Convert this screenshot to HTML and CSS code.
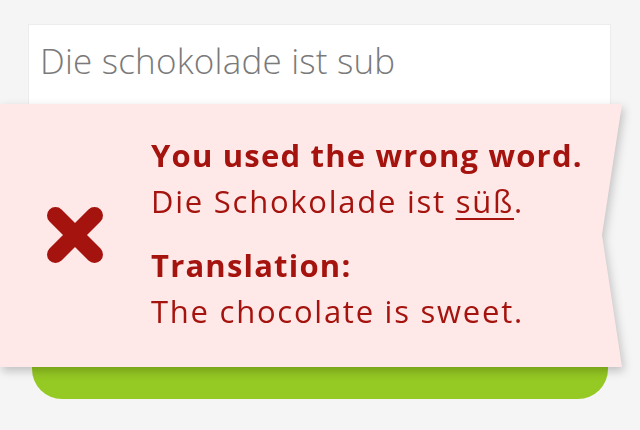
FILE: index.html
```html
<!DOCTYPE html>
<html lang="de">
<head>
<meta charset="utf-8">
<link rel="stylesheet" href="styles.css">
</head>
<body>
<div class="stage">
  <div class="answer-box">
    <span class="answer-text">Die schokolade ist sub</span>
  </div>
  <div class="check-button"></div>

  <div class="feedback-wrap">
    <div class="feedback">
      <div class="feedback-icon">
        <svg width="56" height="56" viewBox="0 0 56 56" aria-hidden="true">
          <path d="M8.5 8.5 L47.5 47.5 M47.5 8.5 L8.5 47.5" stroke="#a5130e" stroke-width="17" stroke-linecap="round" fill="none"/>
        </svg>
      </div>
      <div class="feedback-text">
        <div class="block">
          <div class="title">You used the wrong word.</div>
          <div class="line">Die Schokolade ist <u>süß</u>.</div>
        </div>
        <div class="block">
          <div class="title">Translation:</div>
          <div class="line">The chocolate is sweet.</div>
        </div>
      </div>
    </div>
  </div>
</div>
</body>
</html>
```

FILE: styles.css
```css
html, body {
  margin: 0;
  padding: 0;
}
body {
  background: #f5f5f5;
  width: 640px;
  height: 430px;
  overflow: hidden;
  font-family: "Open Sans", "Lato", sans-serif;
}
.stage {
  position: relative;
  height: 430px;
  padding-top: 25px;
  box-sizing: border-box;
}
.answer-box {
  margin: 0 30px 0 29px;
  height: 110px;
  background: #fff;
  box-shadow: 0 0 0 1px #ececec;
  padding: 14px 12px 0 11px;
  box-sizing: border-box;
}
.answer-text {
  font-weight: 300;
  font-size: 35px;
  letter-spacing: 0.2px;
  color: #7a7a7a;
  line-height: 44px;
}
.check-button {
  margin: 204px 32px 0 32px;
  height: 60px;
  background: #95c923;
  border-radius: 0 0 30px 30px;
}
.feedback-wrap {
  position: absolute;
  left: 0;
  top: 104px;
  width: 623px;
  height: 263px;
  filter: drop-shadow(2px 4px 5px rgba(0, 0, 0, 0.22));
}
.feedback {
  width: 100%;
  height: 100%;
  background: #fee9e8;
  clip-path: polygon(0 0, 622px 0, 602px 131px, 622px 263px, 0 263px);
  display: flex;
  align-items: flex-start;
  padding-top: 28px;
  box-sizing: border-box;
  color: #a5130e;
}
.feedback-icon {
  width: 56px;
  height: 56px;
  margin: 75px 0 0 47px;
  flex: none;
}
.feedback-icon svg {
  display: block;
}
.feedback-text {
  margin-left: 48px;
  display: flex;
  flex-direction: column;
  gap: 18px;
}
.title {
  font-weight: 700;
  font-size: 31px;
  letter-spacing: 1.2px;
  line-height: 46px;
}
.line {
  font-weight: 400;
  font-size: 31px;
  letter-spacing: 1.75px;
  line-height: 46px;
}
.line u {
  text-decoration-thickness: 2px;
  text-underline-offset: 5px;
}
```
